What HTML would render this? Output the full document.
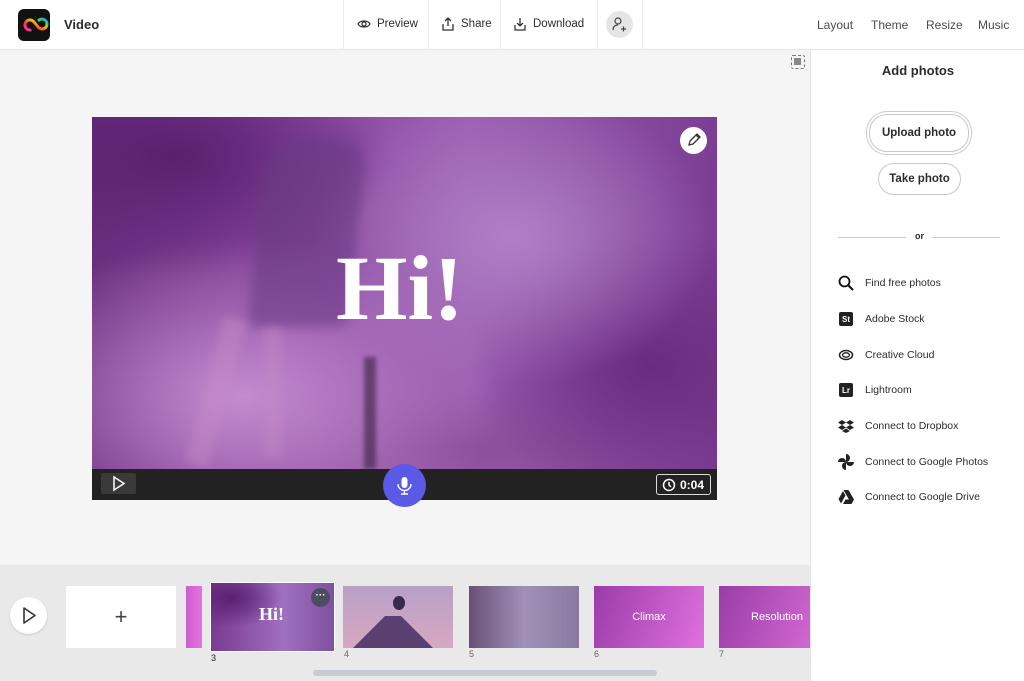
<!DOCTYPE html>
<html><head><meta charset="utf-8">
<style>
*{box-sizing:border-box;margin:0;padding:0}
body{width:1024px;height:681px;overflow:hidden;font-family:"Liberation Sans",sans-serif;background:#f5f5f5;position:relative;color:#2c2c2c}
.top{position:absolute;left:0;top:0;width:1024px;height:50px;background:#fff;border-bottom:1px solid #e6e6e6}
.abs{position:absolute}
.nav{font-size:12px;color:#4b4b4b;top:18px}
.sep{position:absolute;top:0;width:1px;height:50px;background:#ececec}
.btn{position:absolute;top:17px;font-size:11.5px;color:#2c2c2c;display:flex;align-items:center;gap:6px}
.panel{position:absolute;left:810px;top:50px;width:214px;height:631px;background:#fff;border-left:1px solid #e3e3e3}
.pill{position:absolute;border:1px solid #c8c8c8;border-radius:18px;background:#fff;font-size:11.5px;font-weight:bold;display:flex;align-items:center;justify-content:center;color:#2c2c2c}
.item{position:absolute;left:26px;font-size:10.5px;color:#2c2c2c;display:flex;align-items:center}
.item .ic{width:18px;height:18px;margin-right:10px;display:flex;align-items:center;justify-content:center}
.tl{position:absolute;left:0;top:565px;width:810px;height:116px;background:#e9e9e9}
.th{position:absolute;top:586px;height:62px}
.num{position:absolute;font-size:9px;color:#666}
</style></head><body>
<div class="top">
  <div class="abs" style="left:18px;top:9px;width:32px;height:32px;border-radius:6px;background:#111">
    <svg width="32" height="32" viewBox="0 0 32 32"><defs><linearGradient id="g" x1="0" y1="1" x2="1" y2="0"><stop offset="0" stop-color="#ff2bc2"/><stop offset=".35" stop-color="#ff3b3b"/><stop offset=".6" stop-color="#ffb800"/><stop offset=".8" stop-color="#2fd36a"/><stop offset="1" stop-color="#2d8cff"/></linearGradient></defs>
    <path d="M12 21a5 5 0 1 1 4-8l4 5a5 5 0 1 0 1-7" fill="none" stroke="url(#g)" stroke-width="3" stroke-linecap="round"/></svg>
  </div>
  <div class="abs" style="left:64px;top:17px;font-size:13px;font-weight:bold">Video</div>
  <div class="sep" style="left:343px"></div>
  <div class="btn" style="left:357px"><svg width="14" height="14" viewBox="0 0 14 14"><path d="M1 7c2-4 10-4 12 0c-2 4-10 4-12 0z" fill="none" stroke="#333" stroke-width="1.3"/><circle cx="7" cy="7" r="2" fill="none" stroke="#333" stroke-width="1.3"/></svg>Preview</div>
  <div class="sep" style="left:428px"></div>
  <div class="btn" style="left:441px"><svg width="14" height="14" viewBox="0 0 14 14"><path d="M7 9V1M4 4l3-3 3 3M2 7v6h10V7" fill="none" stroke="#333" stroke-width="1.3"/></svg>Share</div>
  <div class="sep" style="left:500px"></div>
  <div class="btn" style="left:513px"><svg width="14" height="14" viewBox="0 0 14 14"><path d="M7 1v8M4 6l3 3 3-3M2 8v5h10V8" fill="none" stroke="#333" stroke-width="1.3"/></svg>Download</div>
  <div class="sep" style="left:597px"></div>
  <div class="abs" style="left:606px;top:11px;width:27px;height:27px;border-radius:50%;background:#e5e5e5"><svg width="27" height="27" viewBox="0 0 27 27"><circle cx="12" cy="10" r="3" fill="none" stroke="#444" stroke-width="1.2"/><path d="M7 19c0-4 3-5 5-5M15 18h5M17.5 15.5v5" fill="none" stroke="#444" stroke-width="1.2"/></svg></div>
  <div class="sep" style="left:642px"></div>
  <div class="abs nav" style="left:817px">Layout</div>
  <div class="abs nav" style="left:871px">Theme</div>
  <div class="abs nav" style="left:926px">Resize</div>
  <div class="abs nav" style="left:978px">Music</div>
</div>

<div class="abs" style="left:791px;top:55px;width:14px;height:14px;border:1.5px dashed #777;border-radius:2px"><div style="margin:2px;width:7px;height:7px;background:#888"></div></div>

<!-- video -->
<div class="abs" style="left:92px;top:117px;width:625px;height:352px;overflow:hidden;background:linear-gradient(90deg,#6a2f80 0%,#8a4aa0 35%,#9a5cb0 60%,#7b3e93 100%)">
  <div class="abs" style="left:0;top:0;width:625px;height:352px;background:radial-gradient(ellipse 220px 120px at 80px 40px,#5a2070,transparent),radial-gradient(ellipse 260px 160px at 150px 280px,#c48cd0,transparent),radial-gradient(ellipse 200px 150px at 420px 120px,#b07fc6,transparent),radial-gradient(ellipse 180px 140px at 560px 250px,#6a2a80,transparent),radial-gradient(ellipse 300px 60px at 350px 330px,#8a4e98,transparent)"></div>
  <div class="abs" style="left:165px;top:20px;width:100px;height:190px;background:#6a3a85;border-radius:40px 30px 10px 10px;opacity:.6;transform:skew(-6deg);filter:blur(6px)"></div>
  <div class="abs" style="left:112px;top:200px;width:24px;height:150px;background:#c48ac8;opacity:.45;transform:rotate(15deg);filter:blur(4px)"></div>
  <div class="abs" style="left:172px;top:210px;width:18px;height:130px;background:#c48ac8;opacity:.4;filter:blur(4px)"></div>
  <div class="abs" style="left:272px;top:240px;width:12px;height:112px;background:#3a2240;opacity:.6;filter:blur(2px)"></div>
  <div class="abs" style="left:244px;top:125px;font-family:'Liberation Serif',serif;font-weight:bold;font-size:92px;color:#fff;line-height:1">Hi!</div>
  <div class="abs" style="left:588px;top:10px;width:27px;height:27px;border-radius:50%;background:#fff"><svg width="27" height="27" viewBox="0 0 27 27"><path d="M9 18l1-4 7-7 3 3-7 7z M16 8l3 3" fill="none" stroke="#333" stroke-width="1.3"/></svg></div>
</div>
<div class="abs" style="left:92px;top:469px;width:625px;height:31px;background:#222"></div>
<div class="abs" style="left:101px;top:473px;width:35px;height:21px;background:#3a3a3a;border-radius:2px"><svg width="35" height="21"><path d="M13 4l10 6.5-10 6.5z" fill="none" stroke="#fff" stroke-width="1.5"/></svg></div>
<div class="abs" style="left:656px;top:474px;width:55px;height:21px;border:1px solid #ddd;border-radius:3px;color:#fff;font-size:12px;font-weight:bold;display:flex;align-items:center;padding-left:5px"><svg width="14" height="14" style="margin-right:4px"><circle cx="7" cy="7" r="5.5" fill="none" stroke="#fff" stroke-width="1.5"/><path d="M7 4v3l2 2" fill="none" stroke="#fff" stroke-width="1.5"/></svg>0:04</div>
<div class="abs" style="left:383px;top:464px;width:43px;height:43px;border-radius:50%;background:#5a5ae6"><svg width="43" height="43"><rect x="18.5" y="13" width="6" height="11" rx="3" fill="#fff"/><path d="M15 20a6.5 6.5 0 0 0 13 0M21.5 27v3M18 30h7" fill="none" stroke="#fff" stroke-width="1.4"/></svg></div>

<!-- panel -->
<div class="panel">
  <div class="abs" style="left:0;width:214px;top:13px;text-align:center;font-size:13px;font-weight:bold">Add photos</div>
  <div class="pill" style="left:58px;top:64px;width:100px;height:38px;box-shadow:0 0 0 2px #fff,0 0 0 3px #ccc">Upload photo</div>
  <div class="pill" style="left:67px;top:113px;width:83px;height:32px">Take photo</div>
  <div class="abs" style="left:27px;top:187px;width:68px;height:1px;background:#ccc"></div>
  <div class="abs" style="left:121px;top:187px;width:68px;height:1px;background:#ccc"></div>
  <div class="abs" style="left:0;width:217px;top:181px;text-align:center;font-size:9px;font-weight:bold">or</div>
  <div class="item" style="top:224px"><span class="ic"><svg width="16" height="16"><circle cx="6.5" cy="6.5" r="5" fill="none" stroke="#111" stroke-width="1.8"/><path d="M10 10l5 5" stroke="#111" stroke-width="2"/></svg></span>Find free photos</div>
  <div class="item" style="top:260px"><span class="ic"><span style="width:14px;height:14px;background:#222;border-radius:2px;color:#fff;font-size:8px;font-weight:bold;display:flex;align-items:center;justify-content:center">St</span></span>Adobe Stock</div>
  <div class="item" style="top:296px"><span class="ic"><svg width="16" height="12"><ellipse cx="8" cy="6" rx="6.5" ry="4.5" fill="none" stroke="#222" stroke-width="1.5"/><ellipse cx="8" cy="6" rx="3.5" ry="2.2" fill="none" stroke="#222" stroke-width="1.3"/></svg></span>Creative Cloud</div>
  <div class="item" style="top:331px"><span class="ic"><span style="width:14px;height:14px;background:#222;border-radius:2px;color:#fff;font-size:8px;font-weight:bold;display:flex;align-items:center;justify-content:center">Lr</span></span>Lightroom</div>
  <div class="item" style="top:367px"><span class="ic"><svg width="16" height="14" viewBox="0 0 16 14"><path d="M4 1L0 3.5 4 6 8 3.5zM12 1L8 3.5 12 6 16 3.5zM0 8.5L4 11 8 8.5 4 6zM16 8.5L12 11 8 8.5 12 6zM4 12L8 14 12 12 8 9.5z" fill="#222"/></svg></span>Connect to Dropbox</div>
  <div class="item" style="top:403px"><span class="ic"><svg width="18" height="18" viewBox="0 0 18 18"><path d="M9 9V1a4 4 0 0 1 0 8zM9 9h8a4 4 0 0 1-8 0zM9 9v8a4 4 0 0 1 0-8zM9 9H1a4 4 0 0 1 8 0z" fill="#222"/></svg></span>Connect to Google Photos</div>
  <div class="item" style="top:438px"><span class="ic"><svg width="16" height="14" viewBox="0 0 16 14"><path d="M5.5 0h5l5.5 9.5-2.5 4.5zM5 1l2.5 4.5L3 13.5 0.5 9zM5 14l2.5-4.5H16L13.5 14z" fill="#222"/></svg></span>Connect to Google Drive</div>
</div>

<!-- timeline -->
<div class="tl"></div>
<div class="abs" style="left:10px;top:597px;width:37px;height:37px;border-radius:50%;background:#fff;box-shadow:0 1px 2px rgba(0,0,0,.15)"><svg width="37" height="37"><path d="M14 11l11 7.5-11 7.5z" fill="none" stroke="#333" stroke-width="1.6" stroke-linejoin="round"/></svg></div>
<div class="th" style="left:66px;width:110px;background:#fff;display:flex;align-items:center;justify-content:center;font-size:22px;color:#444;font-weight:300">+</div>
<div class="th" style="left:186px;width:16px;background:linear-gradient(90deg,#c960d0,#e870e0)"></div>
<div class="abs" style="left:210px;top:582px;width:125px;height:70px;background:radial-gradient(ellipse 50px 30px at 20px 15px,#5a2070,transparent),linear-gradient(90deg,#7a3a90,#a070c0 60%,#8050a0);border:1px solid #fff"><div style="position:absolute;left:48px;top:21px;color:#fff;font-weight:bold;font-size:18px;font-family:'Liberation Serif',serif">Hi!</div><div style="position:absolute;left:100px;top:5px;width:19px;height:19px;border-radius:50%;background:#4d4d60;color:#fff;font-size:10px;text-align:center;line-height:15px;font-weight:bold">···</div></div>
<div class="num" style="left:211px;top:653px;color:#222">3</div>
<div class="th" style="left:343px;width:110px;background:linear-gradient(180deg,#b8a0c8,#d8a8c0);overflow:hidden"><div style="position:absolute;left:10px;top:30px;width:80px;height:32px;background:#5a4070;clip-path:polygon(40% 0,60% 0,100% 100%,0 100%)"></div><div style="position:absolute;left:50px;top:10px;width:12px;height:14px;border-radius:50%;background:#3a2a4a"></div></div>
<div class="num" style="left:344px;top:649px">4</div>
<div class="th" style="left:469px;width:110px;background:linear-gradient(90deg,#6a5078,#a090b8 50%,#8a7aa0)"></div>
<div class="num" style="left:469px;top:649px">5</div>
<div class="th" style="left:594px;width:110px;background:linear-gradient(110deg,#9a3ca8,#e070e0);color:#fff;font-size:11px;display:flex;align-items:center;justify-content:center">Climax</div>
<div class="num" style="left:594px;top:649px">6</div>
<div class="th" style="left:719px;width:91px;background:linear-gradient(110deg,#9a3ca8,#d068d0);color:#fff;font-size:11px;display:flex;align-items:center;padding-left:32px">Resolution</div>
<div class="num" style="left:719px;top:649px">7</div>
<div class="abs" style="left:313px;top:670px;width:344px;height:6px;border-radius:3px;background:#c5ccd3"></div>
</body></html>
